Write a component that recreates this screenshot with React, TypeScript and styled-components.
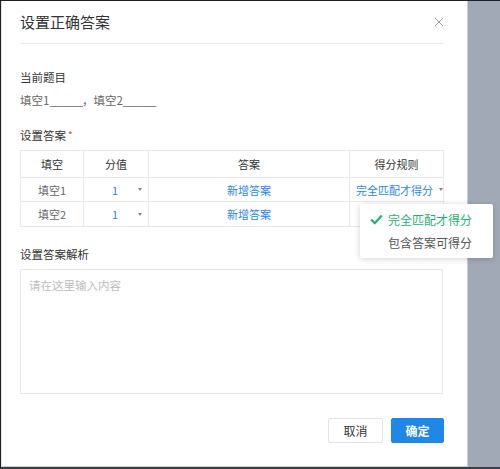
import React from "react";
import styled, { createGlobalStyle } from "styled-components";

const Global = createGlobalStyle`
  html, body { margin: 0; padding: 0; background: #fff; }
  body { font-family: "Noto Sans CJK SC", "Noto Sans", "Liberation Sans", sans-serif; }
  * { box-sizing: border-box; }
`;

const Frame = styled.div`
  width: 500px;
  height: 469px;
  display: flex;
  border-top: 1px solid #1d1f22;
  border-left: 1px solid #1d1f22;
  border-bottom: 2px solid #3a3e45;
  overflow: hidden;
`;

const Dialog = styled.div`
  position: relative;
  width: 466px;
  height: 100%;
  background: #fff;
  border-left: 1px solid #e4e4e4;
  border-bottom: 1px solid #c9cdd3;
  padding: 0 23px 0 18px;
  display: flex;
  flex-direction: column;
  z-index: 2;
`;

const Mask = styled.div`
  flex: 1;
  background: #a1a9b6;
  border-left: 1px solid #c6cbd2;
`;

const Header = styled.div`
  height: 43px;
  padding-top: 11px;
  display: flex;
  justify-content: space-between;
  align-items: flex-start;
  border-bottom: 1px solid #ececec;
`;

const Title = styled.div`
  font-size: 15px;
  line-height: 20px;
  color: #333;
`;

const Close = styled.button`
  border: 0;
  background: none;
  padding: 0;
  margin-top: 5px;
  width: 10px;
  height: 10px;
  display: flex;
  cursor: pointer;
`;

const Label = styled.div<{ $mt: number }>`
  margin-top: ${(p) => p.$mt}px;
  font-size: 11.5px;
  line-height: 16px;
  color: #333;
`;

const Required = styled.span`
  color: #f04134;
  margin-left: 2px;
  font-size: 10px;
  vertical-align: top;
`;

const Question = styled.div`
  margin-top: 7px;
  font-size: 11.5px;
  line-height: 16px;
  color: #666;
`;

const Blank = styled.span`
  letter-spacing: -1px;
`;

const TableWrap = styled.div`
  position: relative;
  margin-top: 7px;
`;

const Table = styled.table`
  width: 423px;
  border-collapse: collapse;
  table-layout: fixed;
  font-size: 11px;
`;

const Th = styled.th<{ $w: number }>`
  width: ${(p) => p.$w}px;
  height: 27px;
  border: 1px solid #e8e8e8;
  font-weight: normal;
  color: #333;
  padding: 0;
  text-align: center;
`;

const Td = styled.td<{ $h: number }>`
  height: ${(p) => p.$h}px;
  border: 1px solid #e8e8e8;
  color: #666;
  padding: 0;
  text-align: center;
`;

const ScoreSelect = styled.div`
  display: flex;
  align-items: center;
  padding: 0 6px 0 0;
`;

const ScoreValue = styled.span`
  flex: 1;
  color: #2a86e8;
  text-align: center;
  padding-left: 8px;
`;

const Caret = styled.span`
  display: inline-block;
  width: 0;
  height: 0;
  border-left: 2.5px solid transparent;
  border-right: 2.5px solid transparent;
  border-top: 3px solid #888;
`;

const Link = styled.span`
  color: #2a86e8;
`;

const RuleSelect = styled.span`
  display: inline-flex;
  align-items: center;
  gap: 6px;
  color: #2a86e8;
  padding-left: 6px;
`;

const Menu = styled.div`
  position: absolute;
  left: 340px;
  top: 54px;
  width: 133px;
  padding: 4px 0;
  background: #fff;
  border-radius: 2px;
  box-shadow: 0 1px 6px rgba(0, 0, 0, 0.18);
  z-index: 10;
`;

const MenuItem = styled.div<{ $active?: boolean }>`
  height: 23px;
  display: flex;
  align-items: center;
  padding-left: 10px;
  gap: 4px;
  font-size: 12px;
  color: ${(p) => (p.$active ? "#1fb371" : "#555")};
`;

const CheckSlot = styled.span`
  width: 14px;
  display: flex;
  align-items: center;
`;

const TextArea = styled.textarea`
  margin-top: 7px;
  width: 423px;
  height: 125px;
  border: 1px solid #e6e6e6;
  border-radius: 1px;
  padding: 7px 8px;
  resize: none;
  outline: none;
  font-family: "Noto Sans CJK SC", "Noto Sans", sans-serif;
  font-size: 11.5px;
  line-height: 16px;
  color: #333;
  &::placeholder { color: #bdbdbd; }
`;

const Footer = styled.div`
  margin-top: 24px;
  display: flex;
  justify-content: flex-end;
  gap: 8px;
`;

const Button = styled.button<{ $primary?: boolean }>`
  width: ${(p) => (p.$primary ? 53 : 55)}px;
  height: 25px;
  border-radius: 2px;
  border: 1px solid ${(p) => (p.$primary ? "#1e87e8" : "#e3e3e3")};
  background: ${(p) => (p.$primary ? "#1e87e8" : "#fff")};
  color: ${(p) => (p.$primary ? "#fff" : "#333")};
  font-family: "Noto Sans CJK SC", "Noto Sans", sans-serif;
  font-size: 12px;
  font-weight: ${(p) => (p.$primary ? 600 : 400)};
  padding: 0;
  cursor: pointer;
`;

const rows = [
  { name: "填空1", h: 24, rule: true },
  { name: "填空2", h: 25, rule: false },
];

export default function App() {
  return (
    <>
      <Global />
      <Frame>
        <Dialog>
          <Header>
            <Title>设置正确答案</Title>
            <Close aria-label="关闭">
              <svg width="10" height="10" viewBox="0 0 10 10">
                <path d="M1 1L9 9M9 1L1 9" stroke="#a0a0a0" strokeWidth="1" fill="none" />
              </svg>
            </Close>
          </Header>
          <Label $mt={25}>当前题目</Label>
          <Question>
            填空1<Blank>______</Blank>，填空2<Blank>______</Blank>
          </Question>
          <Label $mt={19}>
            设置答案<Required>*</Required>
          </Label>
          <TableWrap>
            <Table>
              <thead>
                <tr>
                  <Th $w={63}>填空</Th>
                  <Th $w={65}>分值</Th>
                  <Th $w={201}>答案</Th>
                  <Th $w={94}>得分规则</Th>
                </tr>
              </thead>
              <tbody>
                {rows.map((r) => (
                  <tr key={r.name}>
                    <Td $h={r.h}>{r.name}</Td>
                    <Td $h={r.h}>
                      <ScoreSelect>
                        <ScoreValue>1</ScoreValue>
                        <Caret />
                      </ScoreSelect>
                    </Td>
                    <Td $h={r.h}>
                      <Link>新增答案</Link>
                    </Td>
                    <Td $h={r.h}>
                      {r.rule && (
                        <RuleSelect>
                          完全匹配才得分
                          <Caret />
                        </RuleSelect>
                      )}
                    </Td>
                  </tr>
                ))}
              </tbody>
            </Table>
            <Menu>
              <MenuItem $active>
                <CheckSlot>
                  <svg width="13" height="11" viewBox="0 0 13 11">
                    <path d="M1.2 5.6L4.8 9.2L11.8 1.6" stroke="#1fb371" strokeWidth="2.2" fill="none" />
                  </svg>
                </CheckSlot>
                完全匹配才得分
              </MenuItem>
              <MenuItem>
                <CheckSlot />
                包含答案可得分
              </MenuItem>
            </Menu>
          </TableWrap>
          <Label $mt={19}>设置答案解析</Label>
          <TextArea placeholder="请在这里输入内容" />
          <Footer>
            <Button>取消</Button>
            <Button $primary>确定</Button>
          </Footer>
        </Dialog>
        <Mask />
      </Frame>
    </>
  );
}
